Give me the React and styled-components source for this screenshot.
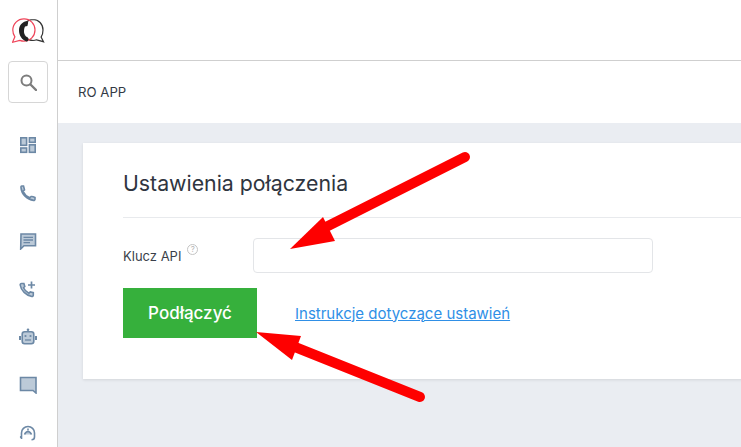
import styled, { createGlobalStyle } from 'styled-components';

const GlobalStyle = createGlobalStyle`
  html, body {
    margin: 0;
    padding: 0;
    height: 100%;
    overflow: hidden;
    background: #fff;
  }
  body {
    font-family: Inter, "Noto Sans", sans-serif;
    color: #2f3540;
  }
`;

const ICON_FILL = '#bccad8';
const ICON_STROKE = '#6c88a5';

function Logo() {
  return (
    <svg width="34" height="26" viewBox="0 0 34 26">
      <path d="M21 1.500c-5.600 0-10 4.600-10 10.500s4.400 10.500 10 10.500c1.300 0 2.500-.2 3.600-.7l6.900 1.900-2.400-4.600c1.200-1.800 1.900-4.300 1.900-7.100 0-5.900-4.400-10.500-10-10.500z" fill="none" stroke="#333" strokeWidth="1.200" />
      <path d="M12 .800C18.200.800 23 5.800 23 12s-4.800 11.200-11 11.200c-1.500 0-2.900-.3-4.200-.8L.5 24.300l2.400-5.500C1.500 16.900.8 14.600.8 12 .8 5.800 5.800.8 12 .8z" fill="none" stroke="#ef4459" strokeWidth="1.200" />
      <path d="M14.500 3.300c-4.500.6-7.500 4.300-7.500 9.300 0 5 3 9.500 7.500 10.800 1.200.3 1.800-.5 1.600-1.600l-.6-2.800-2.500-.4c-1.200-2-1.400-8.200 0-10.200l2.400-.4.700-3c.2-1.200-.6-1.900-1.600-1.700z" fill="#222" />
    </svg>
  );
}

function SearchIcon() {
  return (
    <svg width="17" height="17" viewBox="0 0 17 17" fill="none" stroke="#7d7d7d" strokeWidth="2">
      <circle cx="6.500" cy="6.500" r="5" />
      <path d="M10.500 10.500l5.500 5.500" strokeWidth="2.400" strokeLinecap="round" />
    </svg>
  );
}

function NavIcon({ name }) {
  const common = { stroke: ICON_STROKE, strokeWidth: 1.600, fill: ICON_FILL };
  return (
    <svg width="18" height="18" viewBox="0 0 18 18">
      {name === 'dashboard' && (
        <g {...common}>
          <rect x="1.800" y="1.800" width="5.800" height="7.500" />
          <rect x="10.400" y="1.800" width="5.800" height="4.500" />
          <rect x="1.800" y="12" width="5.800" height="4.300" />
          <rect x="10.400" y="8.800" width="5.800" height="7.500" />
        </g>
      )}
      {name === 'phone' && (
        <path d="M2.800 2h1.700c.5 2 1 3.200 1 3.800L4 7.300c1.400 3 3.800 5.200 6.700 6.500l1.500-1.300c.8-.2 2.300.2 3.800 1v1.700c0 .7-.6 1.300-1.500 1.200C8.200 15.800 2.400 10 2 3.600 1.900 2.700 2.200 2 2.800 2z" {...common} />
      )}
      {name === 'chat' && (
        <g>
          <path d="M2 2h14.500v11.800H5L1.700 17z" {...common} />
          <path d="M4.500 5.300h9.500M4.500 8h9.500M4.500 10.600h6.500" stroke={ICON_STROKE} strokeWidth="1.300" fill="none" />
        </g>
      )}
      {name === 'phoneplus' && (
        <g>
          <path d="M2.500 3.500h2.400l.9 3-1.300 1.300c1 2.300 2.900 4.300 5.400 5.400l1.400-1.300 3 .7v2.500c0 .9-.6 1.500-1.500 1.400C7 15.500 2 10.500 1.200 5 1.100 4.100 1.600 3.500 2.500 3.500z" {...common} />
          <path d="M12.500 1.500v7M9 5h7" stroke={ICON_STROKE} strokeWidth="1.700" fill="none" />
        </g>
      )}
      {name === 'robot' && (
        <g>
          <circle cx="9" cy="1.800" r="1.300" fill={ICON_STROKE} />
          <rect x="3.200" y="3.800" width="11.600" height="12" rx="2.500" {...common} />
          <path d="M1 8v4M17 8v4" stroke={ICON_STROKE} strokeWidth="2" />
          <circle cx="6.500" cy="8" r="1.100" fill={ICON_STROKE} />
          <circle cx="11.500" cy="8" r="1.100" fill={ICON_STROKE} />
          <path d="M6 12h6" stroke={ICON_STROKE} strokeWidth="1.300" />
        </g>
      )}
      {name === 'square' && (
        <path d="M1.500 1.500h15.500v15.500l-3-2.500H1.500z" {...common} />
      )}
      {name === 'support' && (
        <g fill="none" stroke={ICON_STROKE} strokeWidth="1.600">
          <path d="M2.500 15V9a6.500 6.500 0 0 1 13 0v4c0 1.800-1 2.800-3 2.800" />
          <path d="M5.500 10.500c.8-2 2-3 3.500-3s2.700 1 3.500 3" fill={ICON_FILL} />
          <path d="M9 4.500v2" />
          <circle cx="1.800" cy="13" r="1" fill={ICON_STROKE} stroke="none" />
        </g>
      )}
    </svg>
  );
}

const NAV = ['dashboard', 'phone', 'chat', 'phoneplus', 'robot', 'square', 'support'];

export default function App() {
  return (
    <>
      <GlobalStyle />
      <Page>
        <Sidebar>
          <LogoBox><Logo /></LogoBox>
          <SearchButton><SearchIcon /></SearchButton>
          <Nav>
            {NAV.map((name) => (
              <NavItem key={name}><NavIcon name={name} /></NavItem>
            ))}
          </Nav>
        </Sidebar>
        <Main>
          <TopBar />
          <SubBar>RO APP</SubBar>
          <Content>
            <Card>
              <Title>Ustawienia połączenia</Title>
              <Form>
                <Row>
                  <Label>
                    Klucz API
                    <Help>?</Help>
                  </Label>
                  <Input />
                </Row>
                <Actions>
                  <Button>Podłączyć</Button>
                  <HelpLink href="#">Instrukcje dotyczące ustawień</HelpLink>
                </Actions>
              </Form>
            </Card>
          </Content>
        </Main>
        <Arrows width="741" height="447" viewBox="0 0 741 447">
          <path d="M465 157L326 227" stroke="#fe0000" strokeWidth="10" strokeLinecap="round" />
          <polygon points="290,249 323,217 335,241" fill="#fe0000" />
          <path d="M420 397L295 347" stroke="#fe0000" strokeWidth="10" strokeLinecap="round" />
          <polygon points="256,332 301,336 292,360" fill="#fe0000" />
        </Arrows>
      </Page>
    </>
  );
}

const Page = styled.div`
  position: relative;
  display: flex;
  width: 741px;
  height: 447px;
  overflow: hidden;
`;
const Sidebar = styled.aside`
  flex: 0 0 56px;
  padding-right: 1px;
  border-right: 1px solid #cfcfcf;
  display: flex;
  flex-direction: column;
  align-items: center;
`;
const LogoBox = styled.div`
  height: 61px;
  display: flex;
  align-items: center;
  justify-content: center;
  padding-left: 2px;
`;
const SearchButton = styled.div`
  box-sizing: border-box;
  width: 40px;
  height: 42px;
  border: 1px solid #d6d6d6;
  border-radius: 4px;
  display: flex;
  align-items: center;
  justify-content: center;
`;
const Nav = styled.nav`
  display: flex;
  flex-direction: column;
  align-items: center;
  margin-top: 33px;
  gap: 30px;
`;
const NavItem = styled.div`
  width: 18px;
  height: 18px;
  display: flex;
`;
const Main = styled.main`
  flex: 1;
  min-width: 0;
  display: flex;
  flex-direction: column;
`;
const TopBar = styled.header`
  height: 60px;
  border-bottom: 1px solid #cfcfcf;
`;
const SubBar = styled.div`
  height: 62px;
  display: flex;
  align-items: center;
  padding-left: 20px;
  font-size: 13.200px;
  color: #333a45;
`;
const Content = styled.div`
  flex: 1;
  background: #eaedf2;
  padding: 20px 0 0 25px;
`;
const Card = styled.section`
  box-sizing: border-box;
  width: 720px;
  height: 236px;
  background: #fff;
  box-shadow: 0 1px 3px rgba(0, 0, 0, 0.1);
  padding: 27px 0 0 40px;
`;
const Title = styled.h2`
  margin: 0;
  height: 47px;
  font-size: 21.300px;
  line-height: 26px;
  font-weight: 400;
  color: #2f3540;
  border-bottom: 1px solid #e8eaed;
`;
const Form = styled.div`
  padding-top: 20px;
`;
const Row = styled.div`
  display: flex;
  align-items: center;
`;
const Label = styled.label`
  width: 130px;
  font-size: 13px;
  color: #3a3f4a;
  display: flex;
  align-items: center;
  padding-top: 1px;
`;
const Help = styled.span`
  box-sizing: border-box;
  width: 11px;
  height: 11px;
  margin: -13px 0 0 6px;
  border: 1px solid #c4c4c4;
  border-radius: 50%;
  color: #b5b5b5;
  font-size: 8px;
  line-height: 9px;
  text-align: center;
`;
const Input = styled.input`
  box-sizing: border-box;
  width: 400px;
  height: 35px;
  border: 1px solid #e3e5e8;
  border-radius: 4px;
  background: #fff;
  outline: none;
`;
const Actions = styled.div`
  display: flex;
  align-items: center;
  margin-top: 15px;
`;
const Button = styled.button`
  width: 134px;
  height: 50px;
  border: none;
  background: #36b03c;
  color: #fff;
  font-family: inherit;
  font-size: 17px;
  font-weight: 500;
  padding: 0;
`;
const HelpLink = styled.a`
  margin-left: 38px;
  font-size: 15px;
  color: #2f8fe6;
  text-decoration: underline;
`;
const Arrows = styled.svg`
  position: absolute;
  left: 0;
  top: 0;
  pointer-events: none;
`;
